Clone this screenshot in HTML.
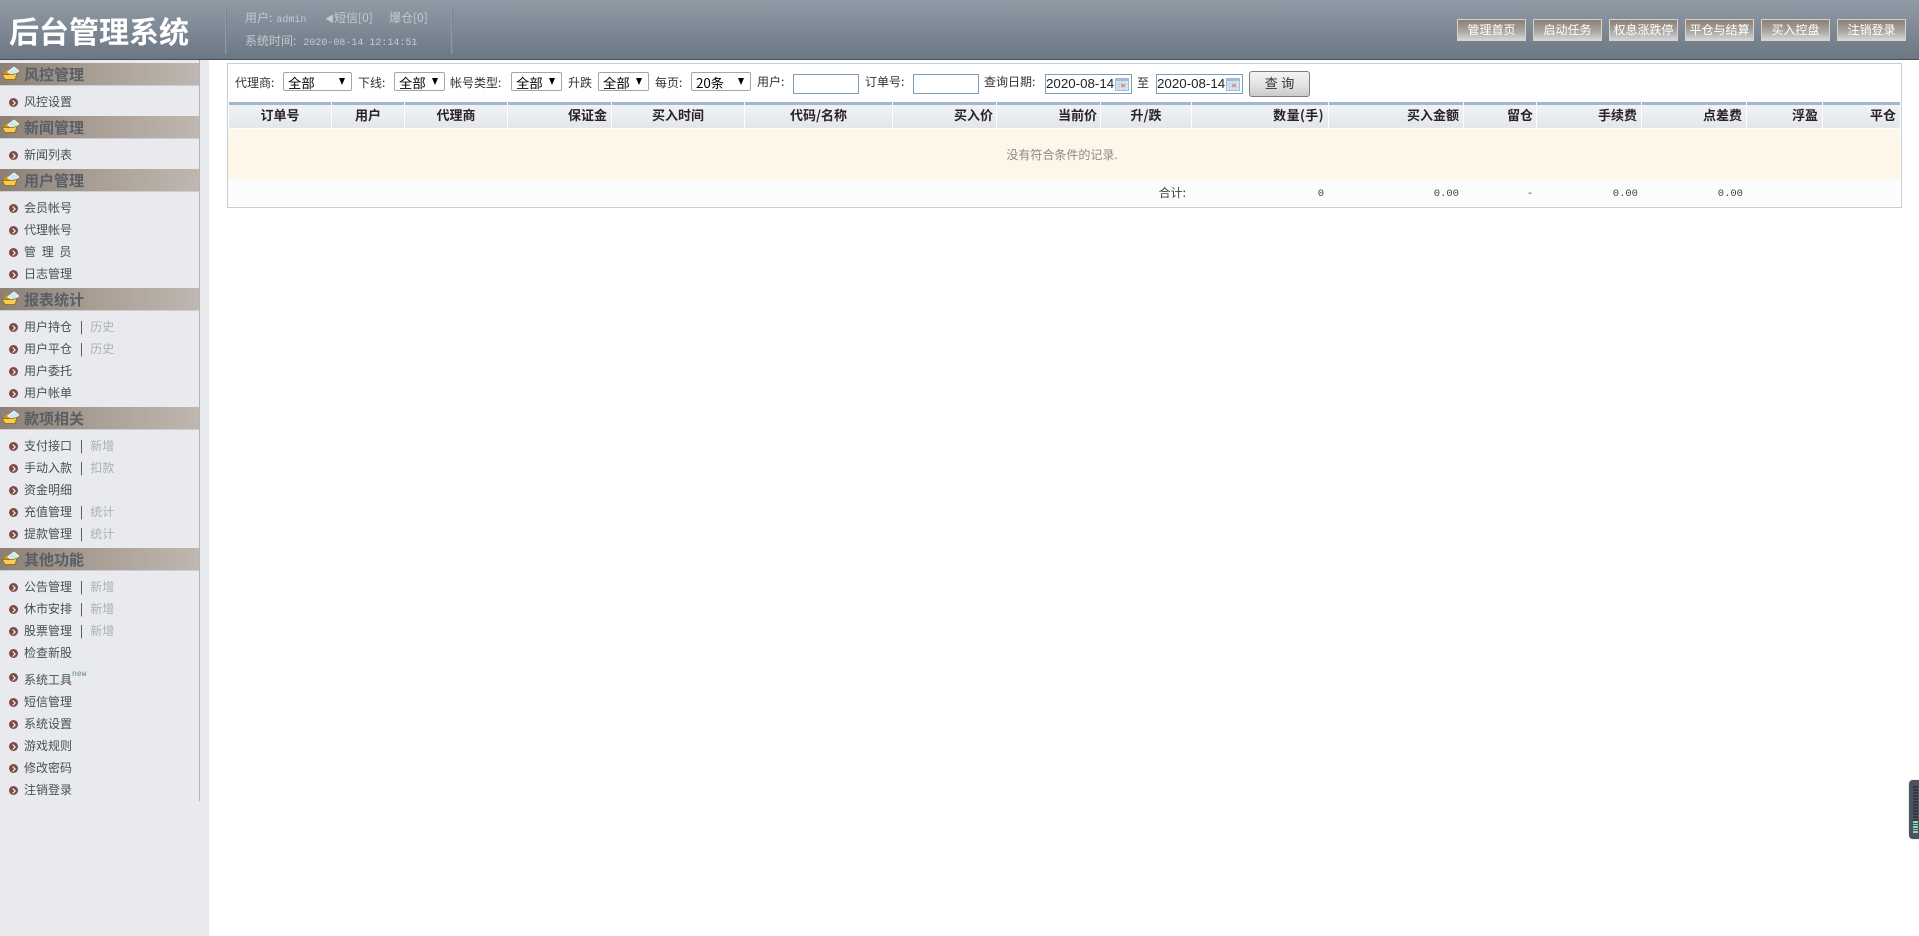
<!DOCTYPE html>
<html lang="zh"><head><meta charset="utf-8"><title>后台管理系统</title>
<style>
html,body{margin:0;padding:0;width:1919px;height:936px;overflow:hidden;background:#fff}
body{position:relative;font:12px/14px "WenQuanYi Zen Hei","Noto Sans CJK SC",sans-serif;color:#333}
#hd{position:absolute;left:0;top:0;width:1919px;height:59px;background:linear-gradient(#909ba6,#6c7784);border-bottom:1px solid #474f59}
.sep{position:absolute;top:8px;width:1px;height:46px;background:#8f9aa4;box-shadow:1px 0 0 #7a8591}
.title{position:absolute;left:9px;top:12px;font:bold 30px/36px "Noto Sans CJK SC",sans-serif;color:#fff;white-space:nowrap}
.ht{position:absolute;color:#c3c9cf;white-space:nowrap}
.m{font-family:"Liberation Mono",monospace;font-size:10px}
.btn{position:absolute;top:19px;width:67px;height:20px;border:1px solid #d8d2c9;background:linear-gradient(#8c8075,#a8a5a2 55%,#d4d6d8);color:#fff;text-align:center;line-height:20px;white-space:nowrap}
#col{position:absolute;left:0;top:60px;width:209px;height:876px;background:#e8eaed}
#line{position:absolute;left:199px;top:60px;width:1px;height:741px;background:#b2b5b8}
.sh{position:absolute;left:0;width:199px;height:22px;background:linear-gradient(90deg,#8c8074,#a89d93 45%,#bfb7b0);border-bottom:1px solid #c9d0d4;font:bold 15px/24px "Noto Sans CJK SC",sans-serif;color:#585e68;text-indent:24px}
.sh svg{position:absolute;left:2px;top:3px}
.it{position:absolute;left:24px;color:#4a4f55;white-space:nowrap;height:14px}
.it i{font-style:normal;color:#333;margin:0 7px 0 8px}.it b{font-weight:normal;color:#adb0b3}
.bu{position:absolute;left:9px;width:9px;height:9px;border-radius:50%;background:#7e4a42}
.bu:after{content:"";position:absolute;left:1.5px;top:2.5px;width:3px;height:3px;border-top:1.3px solid #fff;border-right:1.3px solid #fff;transform:rotate(45deg)}
sup{position:absolute;left:48px;top:-3px;font:8px/9px "Liberation Mono",monospace;color:#5f84a0}
#panel{position:absolute;left:227px;top:63px;width:1673px;height:143px;border:1px solid #c3ced6;background:#fff}
.lb{position:absolute;top:76px;color:#333;white-space:nowrap}
.sel{position:absolute;top:72px;height:17px;border:1px solid #a6a6a6;border-radius:2px;background:#fff;font:13.33px/19px "Noto Sans CJK SC","Liberation Sans",sans-serif;color:#000;padding-left:4px;white-space:nowrap}
.sel:after{content:"";position:absolute;right:6px;top:5px;border-left:3.5px solid transparent;border-right:3.5px solid transparent;border-top:7px solid #000}
.inp{position:absolute;top:74px;height:18px;border:1px solid #7f9db9;background:#fff}
.date{font:13.33px/18px "Liberation Sans",sans-serif;color:#222;white-space:nowrap}
.date svg{position:absolute;right:2px;top:3px}
#qb{position:absolute;left:1249px;top:71px;width:59px;height:24px;border:1px solid #7d7d7d;border-radius:3px;background:linear-gradient(#f4f4f4,#e2e2e2 55%,#cbcbcb);text-align:center;font:13px/24px "WenQuanYi Zen Hei",sans-serif;color:#333}
.th{position:absolute;top:102px;height:26px;box-sizing:border-box;border-top:3px solid #a3b6ca;background:linear-gradient(#edf3f7,#e3e7ec);font:bold 13px/19px "WenQuanYi Zen Hei","Noto Sans CJK SC",sans-serif;color:#2b2226;white-space:nowrap}
.c{text-align:center}.r{text-align:right;padding-right:4px}
#empty{position:absolute;left:226px;top:129px;width:1672px;height:50px;line-height:51px;text-align:center;color:#8a8a8a}
#emptybg{position:absolute;left:228px;top:129px;width:1672px;height:50px;background:#fff6ea}
#tot{position:absolute;left:228px;top:179px;width:1672px;height:26px;background:#fcfcfc}
.tv{position:absolute;top:186px;color:#444;text-align:right;white-space:nowrap}
.tv.m{top:187px;font-size:10.5px}
#fl{position:absolute;left:1909px;top:780px;width:10px;height:59px;background:#4b5362;border-radius:4px 0 0 4px;box-shadow:0 0 1px #888}
#fl u{position:absolute;left:4px;width:5px;height:1.5px;background:#343a45}
#fl u.g{background:#7fe0b4}
</style></head><body>
<div id="hd">
<div class="title">后台管理系统</div>
<div class="sep" style="left:225px"></div><div class="sep" style="left:451px"></div>
<div class="ht" style="left:245px;top:11px">用户:<span class="m" style="margin-left:4px">admin</span></div>
<div class="ht" style="left:325px;top:11px"><span style="font-size:9px">◀</span>短信[0]</div>
<div class="ht" style="left:389px;top:11px">爆仓[0]</div>
<div class="ht" style="left:245px;top:34px">系统时间:<span class="m" style="margin-left:7px">2020-08-14 12:14:51</span></div>
<div class="btn" style="left:1457px">管理首页</div>
<div class="btn" style="left:1533px">启动任务</div>
<div class="btn" style="left:1609px">权息涨跌停</div>
<div class="btn" style="left:1685px">平仓与结算</div>
<div class="btn" style="left:1761px">买入控盘</div>
<div class="btn" style="left:1837px">注销登录</div>
</div>
<div id="col"></div><div id="line"></div>

<div class="sh" style="top:63px"><svg width="17" height="15" viewBox="0 0 17 15"><path d="M1 8L5 4h4v5z" fill="#d0901f"/><path d="M5.500 6L12 1l5 4-6 4z" fill="#c6e9f7" stroke="#fff" stroke-width=".7"/><path d="M0 8.500h10l5-1-2 6H3z" fill="#f7ce52" stroke="#8f6410" stroke-width=".8"/></svg>风控管理</div>
<div class="sh" style="top:116px"><svg width="17" height="15" viewBox="0 0 17 15"><path d="M1 8L5 4h4v5z" fill="#d0901f"/><path d="M5.500 6L12 1l5 4-6 4z" fill="#c6e9f7" stroke="#fff" stroke-width=".7"/><path d="M0 8.500h10l5-1-2 6H3z" fill="#f7ce52" stroke="#8f6410" stroke-width=".8"/></svg>新闻管理</div>
<div class="sh" style="top:169px"><svg width="17" height="15" viewBox="0 0 17 15"><path d="M1 8L5 4h4v5z" fill="#d0901f"/><path d="M5.500 6L12 1l5 4-6 4z" fill="#c6e9f7" stroke="#fff" stroke-width=".7"/><path d="M0 8.500h10l5-1-2 6H3z" fill="#f7ce52" stroke="#8f6410" stroke-width=".8"/></svg>用户管理</div>
<div class="sh" style="top:288px"><svg width="17" height="15" viewBox="0 0 17 15"><path d="M1 8L5 4h4v5z" fill="#d0901f"/><path d="M5.500 6L12 1l5 4-6 4z" fill="#c6e9f7" stroke="#fff" stroke-width=".7"/><path d="M0 8.500h10l5-1-2 6H3z" fill="#f7ce52" stroke="#8f6410" stroke-width=".8"/></svg>报表统计</div>
<div class="sh" style="top:407px"><svg width="17" height="15" viewBox="0 0 17 15"><path d="M1 8L5 4h4v5z" fill="#d0901f"/><path d="M5.500 6L12 1l5 4-6 4z" fill="#c6e9f7" stroke="#fff" stroke-width=".7"/><path d="M0 8.500h10l5-1-2 6H3z" fill="#f7ce52" stroke="#8f6410" stroke-width=".8"/></svg>款项相关</div>
<div class="sh" style="top:548px"><svg width="17" height="15" viewBox="0 0 17 15"><path d="M1 8L5 4h4v5z" fill="#d0901f"/><path d="M5.500 6L12 1l5 4-6 4z" fill="#c6e9f7" stroke="#fff" stroke-width=".7"/><path d="M0 8.500h10l5-1-2 6H3z" fill="#f7ce52" stroke="#8f6410" stroke-width=".8"/></svg>其他功能</div>

<div class="bu" style="top:98px"></div><div class="it" style="top:95px">风控设置</div>
<div class="bu" style="top:151px"></div><div class="it" style="top:148px">新闻列表</div>
<div class="bu" style="top:204px"></div><div class="it" style="top:201px">会员帐号</div>
<div class="bu" style="top:226px"></div><div class="it" style="top:223px">代理帐号</div>
<div class="bu" style="top:248px"></div><div class="it" style="top:245px;word-spacing:3px">管 理 员</div>
<div class="bu" style="top:270px"></div><div class="it" style="top:267px">日志管理</div>
<div class="bu" style="top:323px"></div><div class="it" style="top:320px">用户持仓<i>|</i><b>历史</b></div>
<div class="bu" style="top:345px"></div><div class="it" style="top:342px">用户平仓<i>|</i><b>历史</b></div>
<div class="bu" style="top:367px"></div><div class="it" style="top:364px">用户委托</div>
<div class="bu" style="top:389px"></div><div class="it" style="top:386px">用户帐单</div>
<div class="bu" style="top:442px"></div><div class="it" style="top:439px">支付接口<i>|</i><b>新增</b></div>
<div class="bu" style="top:464px"></div><div class="it" style="top:461px">手动入款<i>|</i><b>扣款</b></div>
<div class="bu" style="top:486px"></div><div class="it" style="top:483px">资金明细</div>
<div class="bu" style="top:508px"></div><div class="it" style="top:505px">充值管理<i>|</i><b>统计</b></div>
<div class="bu" style="top:530px"></div><div class="it" style="top:527px">提款管理<i>|</i><b>统计</b></div>
<div class="bu" style="top:583px"></div><div class="it" style="top:580px">公告管理<i>|</i><b>新增</b></div>
<div class="bu" style="top:605px"></div><div class="it" style="top:602px">休市安排<i>|</i><b>新增</b></div>
<div class="bu" style="top:627px"></div><div class="it" style="top:624px">股票管理<i>|</i><b>新增</b></div>
<div class="bu" style="top:649px"></div><div class="it" style="top:646px">检查新股</div>
<div class="bu" style="top:673px"></div><div class="it" style="top:673px">系统工具<sup>new</sup></div>
<div class="bu" style="top:698px"></div><div class="it" style="top:695px">短信管理</div>
<div class="bu" style="top:720px"></div><div class="it" style="top:717px">系统设置</div>
<div class="bu" style="top:742px"></div><div class="it" style="top:739px">游戏规则</div>
<div class="bu" style="top:764px"></div><div class="it" style="top:761px">修改密码</div>
<div class="bu" style="top:786px"></div><div class="it" style="top:783px">注销登录</div>

<div id="panel"></div>
<div class="lb" style="left:235px">代理商:</div>
<div class="sel" style="left:283px;width:63px">全部</div>
<div class="lb" style="left:358px">下线:</div>
<div class="sel" style="left:394px;width:45px">全部</div>
<div class="lb" style="left:450px">帐号类型:</div>
<div class="sel" style="left:511px;width:45px">全部</div>
<div class="lb" style="left:568px">升跌</div>
<div class="sel" style="left:598px;width:45px">全部</div>
<div class="lb" style="left:655px">每页:</div>
<div class="sel" style="left:691px;width:54px">20条</div>
<div class="lb" style="left:757px;top:75px">用户:</div>
<div class="inp" style="left:793px;width:64px"></div>
<div class="lb" style="left:865px;top:75px">订单号:</div>
<div class="inp" style="left:913px;width:64px"></div>
<div class="lb" style="left:984px;top:75px">查询日期:</div>
<div class="inp date" style="left:1045px;width:85px">2020-08-14<svg width="14" height="13"><rect width="14" height="13" fill="#9fbddb"/><rect x="1" y="3" width="12" height="9" fill="#dce8f3"/><path d="M1 6h12M1 9h12M4 3v9M7 3v9M10 3v9" stroke="#a9c0d6" stroke-width=".6"/><rect x="6" y="6" width="4" height="3" fill="#d99a8a"/></svg></div>
<div class="lb" style="left:1137px;top:76px">至</div>
<div class="inp date" style="left:1156px;width:85px">2020-08-14<svg width="14" height="13"><rect width="14" height="13" fill="#9fbddb"/><rect x="1" y="3" width="12" height="9" fill="#dce8f3"/><path d="M1 6h12M1 9h12M4 3v9M7 3v9M10 3v9" stroke="#a9c0d6" stroke-width=".6"/><rect x="6" y="6" width="4" height="3" fill="#d99a8a"/></svg></div>
<div id="qb">查 询</div>

<div class="th c" style="left:229px;width:102px">订单号</div>
<div class="th c" style="left:332px;width:72px">用户</div>
<div class="th c" style="left:405px;width:102px">代理商</div>
<div class="th r" style="left:508px;width:103px">保证金</div>
<div class="th c" style="left:612px;width:132px">买入时间</div>
<div class="th c" style="left:745px;width:147px">代码/名称</div>
<div class="th r" style="left:893px;width:103px;padding-right:3px">买入价</div>
<div class="th r" style="left:997px;width:103px;padding-right:3px">当前价</div>
<div class="th c" style="left:1101px;width:90px">升/跌</div>
<div class="th r" style="left:1192px;width:136px;letter-spacing:.4px">数量(手)</div>
<div class="th r" style="left:1329px;width:134px">买入金额</div>
<div class="th r" style="left:1464px;width:72px;padding-right:3px">留仓</div>
<div class="th r" style="left:1537px;width:104px">手续费</div>
<div class="th r" style="left:1642px;width:104px">点差费</div>
<div class="th r" style="left:1747px;width:75px">浮盈</div>
<div class="th r" style="left:1823px;width:77px">平仓</div>

<div id="emptybg"></div>
<div id="empty">没有符合条件的记录.</div>
<div id="tot"></div>
<div class="tv" style="left:1100px;width:86px">合计:</div>
<div class="tv m" style="left:1250px;width:74px">0</div>
<div class="tv m" style="left:1380px;width:79px">0.00</div>
<div class="tv m" style="left:1500px;width:33px">-</div>
<div class="tv m" style="left:1560px;width:78px">0.00</div>
<div class="tv m" style="left:1665px;width:78px">0.00</div>

<div id="fl">
<u style="top:6px"></u><u style="top:9px"></u><u style="top:12px"></u><u style="top:15px"></u><u style="top:18px"></u><u style="top:21px"></u><u style="top:24px"></u><u style="top:27px"></u><u style="top:30px"></u><u style="top:33px"></u><u style="top:36px"></u><u style="top:39px"></u>
<u class="g" style="top:41px"></u><u class="g" style="top:43.5px"></u><u class="g" style="top:46px"></u><u class="g" style="top:48.5px"></u><u class="g" style="top:51px"></u>
</div>
</body></html>
